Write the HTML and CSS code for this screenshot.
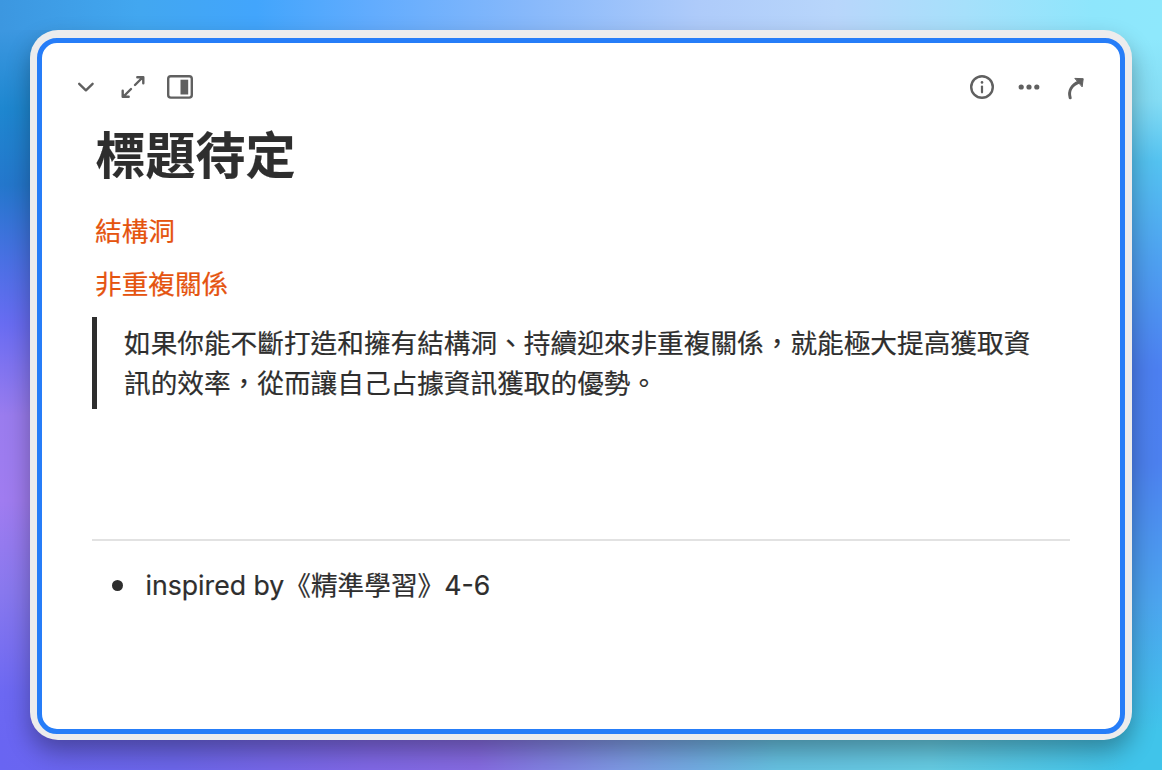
FILE: index.html
```
<!DOCTYPE html>
<html lang="zh-Hant">
<head>
    <meta charset="UTF-8">
    <meta name="viewport" content="width=device-width, initial-scale=1.0">
    <title>標題待定</title>
    <link rel="stylesheet" href="styles.css">
</head>
<body>
    <div class="window">
        <main class="card">
            <header class="toolbar">
                <div class="tools">
                    <svg class="icon" viewBox="0 0 28 28">
                        <path d="M7.2 10.8l6.7 6.5 6.7-6.5" />
                    </svg>
                    <svg class="icon" viewBox="0 0 28 28">
                        <path d="M16 12l7-7M12 16l-7 7M18.3 4.2h6v6M3.7 17.8v6h6" />
                    </svg>
                    <svg class="icon" viewBox="0 0 28 28">
                        <rect x="2.2" y="3.2" width="23.6" height="21.4" rx="2.6" />
                        <path class="solid" d="M14.5 6.7h7.7v14.8h-7.7z" />
                    </svg>
                </div>
                <div class="tools">
                    <svg class="icon" viewBox="0 0 28 28">
                        <circle cx="14" cy="14" r="10.8" />
                        <circle class="solid" cx="14" cy="9.4" r="1.3" />
                        <path class="thin" d="M14 13.5v5.8" />
                    </svg>
                    <svg class="icon" viewBox="0 0 28 28">
                        <circle class="solid" cx="6.2" cy="14" r="2.6" />
                        <circle class="solid" cx="14" cy="14" r="2.6" />
                        <circle class="solid" cx="21.8" cy="14" r="2.6" />
                    </svg>
                    <svg class="icon" viewBox="0 0 28 28">
                        <path class="bold" d="M8.2 24.8C6.2 18 9.5 12 17 9" />
                        <path class="solid round" d="M13.2 5.4l8 .3-1 7.8z" />
                    </svg>
                </div>
            </header>

            <article class="note">
                <h1>標題待定</h1>
                <p class="tag">結構洞</p>
                <p class="tag">非重複關係</p>
                <blockquote>如果你能不斷打造和擁有結構洞、持續迎來非重複關係，就能極大提高獲取資訊的效率，從而讓自己占據資訊獲取的優勢。</blockquote>
                <hr>
                <ul>
                    <li>inspired by《精準學習》4-6</li>
                </ul>
            </article>
        </main>
    </div>
</body>
</html>
```
FILE: styles.css
```
* {
    box-sizing: border-box;
}

body {
    margin: 0;
    padding: 30px;
    height: 100vh;
    overflow: hidden;
    font-family: "Inter", "Noto Sans CJK TC", sans-serif;
    color: #2e2e2e;
    background:
        linear-gradient(90deg, #3c97e0 0%, #42a7f0 12%, #42a5fc 22%, #62acfe 32%, #86b8fb 45%, #aecbfa 60%, #b8d6fb 72%, #a6e0fb 83%, #8ee6fc 94%, #8ee8fc 100%) 0 0 / 100% 30px no-repeat,
        linear-gradient(90deg, #6965f2 0%, #6c66ea 15%, #8068e6 32%, #866be2 41%, #7d9be4 54%, #66c2e2 67%, #66cce4 80%, #40c4ea 97%) 0 100% / 100% 30px no-repeat,
        linear-gradient(180deg, #3c97e0 0%, #3c97e0 4%, #1e87d0 14%, #2477cc 24%, #4a70e4 34%, #686cf2 42%, #9a7cee 54%, #a07cf0 65%, #8878ee 77%, #6c68f2 90%, #6965f2 100%) 0 0 / 50% 100% no-repeat,
        linear-gradient(180deg, #8ee8fc 0%, #8ee8fc 5%, #84dcf4 13%, #54c2f0 21%, #4ea0f0 34%, #4c7ff0 48%, #4c80ee 60%, #4ca4ee 78%, #40c4ea 95%) 100% 0 / 50% 100% no-repeat;
}

.window {
    height: 710px;
    padding: 8px 7px 6px;
    border-radius: 28px;
    background: #ececed;
    box-shadow: 0 12px 24px rgba(0, 0, 0, 0.32);
}

.card {
    height: 100%;
    padding: 30px 30px 0;
    border: 5px solid #267df8;
    border-radius: 20px;
    background: #fff;
}

.toolbar,
.tools {
    display: flex;
    justify-content: space-between;
}

.tools {
    gap: 19px;
}

.icon {
    width: 28px;
    height: 28px;
    fill: none;
    stroke: #606060;
    stroke-width: 2.4;
    stroke-linecap: round;
    stroke-linejoin: round;
}

.icon .solid {
    fill: #606060;
    stroke: none;
}

.icon .round {
    stroke: #606060;
    stroke-width: 1;
}

.icon .bold {
    stroke-width: 3;
}

.icon .thin {
    stroke-width: 2.2;
}

.note {
    padding: 17px 20px 0;
    font-size: 26.67px;
    line-height: 40px;
    -webkit-text-stroke: 0.2px;
}

h1 {
    margin: 0 0 17px 3.5px;
    font-size: 50px;
    line-height: 76px;
    font-weight: 700;
}

.tag {
    margin: 0 0 13px 3px;
    color: #e5540f;
}

blockquote {
    margin: 0 0 130px;
    padding: 6px 30px 6px 27px;
    border-left: 5px solid #2e2e2e;
}

hr {
    height: 2px;
    margin: 0;
    border: none;
    background: #e2e2e2;
}

ul {
    margin: 24px 0 0;
    padding: 0;
    list-style: none;
}

li {
    display: flex;
    align-items: center;
}

li::before {
    content: "";
    width: 11px;
    height: 11px;
    margin: 0 22.5px 0 20px;
    border-radius: 50%;
    background: #2e2e2e;
}
```
